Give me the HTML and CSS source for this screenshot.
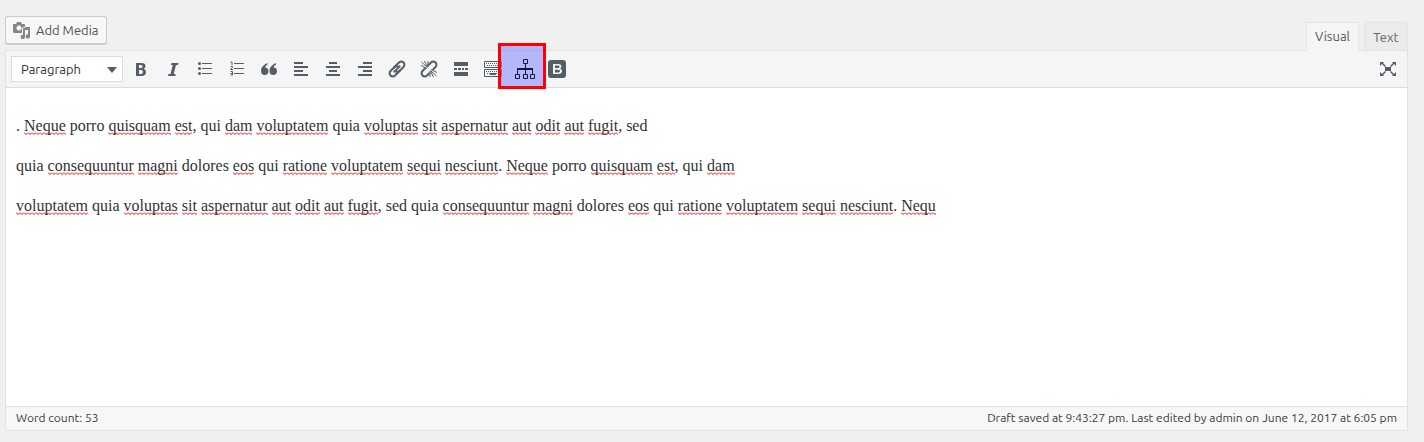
FILE: index.html
```html
<!DOCTYPE html>
<html lang="en">
<head>
<meta charset="utf-8">
<title>Edit Post</title>
<link rel="stylesheet" href="styles.css">
</head>
<body>
<main class="editor">
  <header class="tools">
    <button class="add-media" type="button">
      <svg class="icon-media" width="18" height="18" viewBox="0 0 18 18"><path fill="#82878c" fill-rule="evenodd" d="M0 4q0-1 1-1h2l1-2h4l1 2h2q1 0 1 1v3H9v5H1q-1 0-1-1zM6 4.500a2.500 2.500 0 1 0 .01 0zM10 6h7v9.500a2.200 2.200 0 1 1-2-2.200V9h-3v7a2.200 2.200 0 1 1-2-2.200z"/></svg>
      Add Media
    </button>
    <nav class="tabs">
      <button class="tab tab-active" type="button">Visual</button>
      <button class="tab" type="button">Text</button>
    </nav>
  </header>
  <section class="panel">
    <div class="toolbar">
      <div class="format">
        <select class="format-select" aria-label="Text format"><option>Paragraph</option></select>
        <svg class="format-arrow" width="10" height="6" viewBox="0 0 10 6"><path d="M0 0h10L5 6z"/></svg>
      </div>
      <button class="tool" type="button" aria-label="Bold"><svg viewBox="0 0 20 20"><path fill-rule="evenodd" d="M5 4h5.500Q14.500 4 14.500 7q0 2-1.800 2.700Q15 10.500 15 13q0 4-4.500 4H5zM8 6v3h2q1.500 0 1.500-1.500T10 6zM8 11v4h2q2 0 2-2t-2-2z"/></svg></button>
      <button class="tool" type="button" aria-label="Italic"><svg viewBox="0 0 20 20"><path d="M8.500 4H15.500l-.5 2h-2l-2.300 9h2l-.5 2H5l.5-2h2l2.300-9H8z"/></svg></button>
      <button class="tool" type="button" aria-label="Bulleted list"><svg viewBox="0 0 20 20"><circle cx="4.500" cy="4.500" r="1.500"/><circle cx="4.500" cy="9.500" r="1.500"/><circle cx="4.500" cy="14.500" r="1.500"/><path d="M7 4h10v1H7zM7 9h10v1H7zM7 14h10v1H7z"/></svg></button>
      <button class="tool" type="button" aria-label="Numbered list"><svg viewBox="0 0 20 20"><path d="M7 4h10v1H7zM7 9h10v1H7zM7 14h10v1H7z"/><path class="line" d="M3.500 3H5v3M3.500 7.500h2v1L3.500 10.500h2.500M3.500 12.500h2v3.500h-2M3.500 14.500h2"/></svg></button>
      <button class="tool" type="button" aria-label="Blockquote"><svg viewBox="0 0 20 20"><path d="M8.500 4v1.500Q6.500 6.500 6 8.500q3.500.2 3.500 3.700A3.600 3.600 0 0 1 5.700 16Q2 16 2 11.500T8.500 4zM17 4v1.500q-2 1-2.500 3 3.500.2 3.500 3.700a3.600 3.600 0 0 1-3.700 3.800q-3.800 0-3.800-4.500T17 4z"/></svg></button>
      <button class="tool" type="button" aria-label="Align left"><svg viewBox="0 0 20 20"><path d="M3 3h9v2H3zM3 7h14v2H3zM3 11h9v2H3zM3 15h14v2H3z"/></svg></button>
      <button class="tool" type="button" aria-label="Align center"><svg viewBox="0 0 20 20"><path d="M6 3h8v2H6zM3 7h14v2H3zM6 11h8v2H6zM3 15h14v2H3z"/></svg></button>
      <button class="tool" type="button" aria-label="Align right"><svg viewBox="0 0 20 20"><path d="M8 3h9v2H8zM3 7h14v2H3zM8 11h9v2H8zM3 15h14v2H3z"/></svg></button>
      <button class="tool" type="button" aria-label="Insert link"><svg viewBox="0 0 20 20"><g class="thick" transform="rotate(-45 10 10)"><path d="M11.500 13.200H4a3.200 3.200 0 0 1 0-6.400h5q2.500 0 3.500 2.200M5.500 10H10"/><path d="M8.500 6.800H16a3.200 3.200 0 0 1 0 6.400h-5q-2.500 0-3.500-2.200M10 10h4.500"/></g></svg></button>
      <button class="tool" type="button" aria-label="Remove link"><svg viewBox="0 0 20 20"><g class="thick" transform="rotate(-45 10 10)"><path d="M8 13.200H4a3.200 3.200 0 0 1 0-6.400h4.500M11.500 6.800H16a3.200 3.200 0 0 1 0 6.400h-4"/></g><path class="line" d="M8.500 8.500L2.500 3M8.500 8L5.500 2M9 8V2M8 9.500L2 6.500M11.500 11.500l6 5.500M11.500 12l3 6M11 12v6M12 10.500l6 3"/></svg></button>
      <button class="tool" type="button" aria-label="Read more"><svg viewBox="0 0 20 20"><path d="M3 3h14v4H3zM3 9h3v2H3zM7 9h3v2H7zM11 9h2v2h-2zM14 9h3v2h-3zM3 13h14v4H3z"/></svg></button>
      <button class="tool" type="button" aria-label="Toolbar toggle"><svg viewBox="0 0 20 20"><path class="line" d="M1.500 2.500h17v6h-17zM1.500 10.500h17v7h-17z"/><path class="dots" d="M3 4.500h14M4 6.500h14M3 12.500h14M4 14.500h3M13 14.500h4"/><path d="M7 14h6v2H7z"/></svg></button>
      <button class="tool tool-marked" type="button" aria-label="Site map"><svg viewBox="0 0 22 22"><path class="line" d="M9.500 1.500h4v4h-4zM1.500 16.500h4v4h-4zM9.500 16.500h4v4h-4zM16.500 16.500h4v4h-4z"/><path d="M11 6h1v4h7v6h-1v-4h-6v4h-1v-4H4v4H3v-6h8z"/></svg></button>
      <button class="tool" type="button" aria-label="Shortcodes"><svg viewBox="0 0 20 20"><path fill-rule="evenodd" d="M4 1h12q3 0 3 3v12q0 3-3 3H4q-3 0-3-3V4q0-3 3-3zM6 5v10h5q4 0 4-3 0-2-2-2.500 1.500-.5 1.500-2Q14.500 5 11 5zM8 6.500h3q1.500 0 1.500 1.200T11 9H8zM8 10.700h3q2 0 2 1.300t-2 1.400H8z"/></svg></button>
      <button class="tool tool-end" type="button" aria-label="Fullscreen"><svg viewBox="0 0 20 20"><path d="M7 8h6v4H7zM2 3h4L5 4l3 3-1 1-3-3-2 2zM18 3v4l-2-2-3 3-1-1 3-3-1-1zM2 17v-4l2 2 3-3 1 1-3 3 1 1zM18 17h-4l1-1-3-3 1-1 3 3 2-2z"/></svg></button>
    </div>
    <article class="content">
      <p>. <u>Neque</u> porro <u>quisquam</u> <u>est</u>, qui <u>dam</u> <u>voluptatem</u> quia <u>voluptas</u> <u>sit</u> <u>aspernatur</u> <u>aut</u> <u>odit</u> <u>aut</u> <u>fugit</u>, sed</p>
      <p>quia <u>consequuntur</u> <u>magni</u> dolores <u>eos</u> qui <u>ratione</u> <u>voluptatem</u> <u>sequi</u> <u>nesciunt</u>. <u>Neque</u> porro <u>quisquam</u> <u>est</u>, qui <u>dam</u></p>
      <p><u>voluptatem</u> quia <u>voluptas</u> <u>sit</u> <u>aspernatur</u> <u>aut</u> <u>odit</u> <u>aut</u> <u>fugit</u>, sed quia <u>consequuntur</u> <u>magni</u> dolores <u>eos</u> qui <u>ratione</u> <u>voluptatem</u> <u>sequi</u> <u>nesciunt</u>. <u>Nequ</u></p>
    </article>
    <footer class="status"><span>Word count: 53</span><span>Draft saved at 9:43:27 pm. Last edited by admin on June 12, 2017 at 6:05 pm</span></footer>
  </section>
</main>
</body>
</html>
```
FILE: styles.css
```css
* { box-sizing: border-box; }
body { margin: 0; background: #f0f0f0; color: #3a3a3a; font-family: Ubuntu, "Noto Sans", sans-serif; font-size: 13px; }
button, select { font: inherit; }
.editor { padding: 16px 16px 12px 5px; }
.tools { display: flex; justify-content: space-between; align-items: flex-start; }
.add-media { display: flex; align-items: center; gap: 5px; height: 29px; padding: 0 7px; border: 1px solid #ccc; border-bottom-width: 2px; border-radius: 3px; background: #f7f7f7; color: #555; }
.icon-media { display: block; }
.tabs { display: flex; gap: 5px; padding-top: 6px; }
.tab { min-width: 44px; height: 28px; padding: 0 8px; border: 1px solid #e5e5e5; border-bottom: 0; background: #ebebeb; color: #666; }
.tab-active { height: 29px; margin-bottom: -1px; padding-bottom: 2px; background: #f5f5f5; color: #555; position: relative; z-index: 1; }
.panel { border: 1px solid #e2e2e2; background: #fff; }
.toolbar { display: flex; align-items: center; gap: 4px; height: 37px; padding: 0 5px; background: #f5f5f5; border-bottom: 1px solid #ddd; }
.format { position: relative; width: 112px; }
.format-select { display: block; width: 100%; height: 26px; padding: 0 9px; border: 1px solid #ddd; border-radius: 0; background: #fff; color: #333; appearance: none; }
.format-arrow { position: absolute; right: 6px; top: 11px; fill: #555d66; pointer-events: none; }
.tool { display: flex; flex: none; align-items: center; justify-content: center; width: 28px; height: 28px; padding: 0; border: 0; background: transparent; color: #555d66; }
.tool svg { display: block; width: 20px; height: 20px; fill: currentColor; }
.tool .line, .tool .thick, .tool .dots { fill: none; stroke: currentColor; }
.tool .thick { stroke-width: 2; }
.tool .dots { stroke-dasharray: 1 1; }
.tool-marked { width: 48px; height: 46px; margin: -13px -7px -7px -13px; padding: 6px 0 0 6px; border: 3px solid #f00; background: rgba(140, 140, 255, 0.6); color: #151540; z-index: 1; }
.tool-marked svg { width: 22px; height: 22px; }
.tool-end { margin-left: auto; }
.content { min-height: 318px; padding: 26px 10px; color: #333; font-family: "Liberation Serif", serif; font-size: 16px; line-height: 24px; }
.content p { margin: 0 0 16px; }
.content u { text-decoration: none; padding-bottom: 1px; background: url("data:image/svg+xml,%3Csvg xmlns='http://www.w3.org/2000/svg' width='4' height='3'%3E%3Cpath d='M0 .5L2 2.500L4 .5' fill='none' stroke='%23f00'/%3E%3C/svg%3E") left bottom repeat-x; }
.status { display: flex; justify-content: space-between; height: 24px; padding: 0 10px; border-top: 1px solid #e2e2e2; background: #f7f7f7; font-size: 12px; line-height: 22px; }
```
